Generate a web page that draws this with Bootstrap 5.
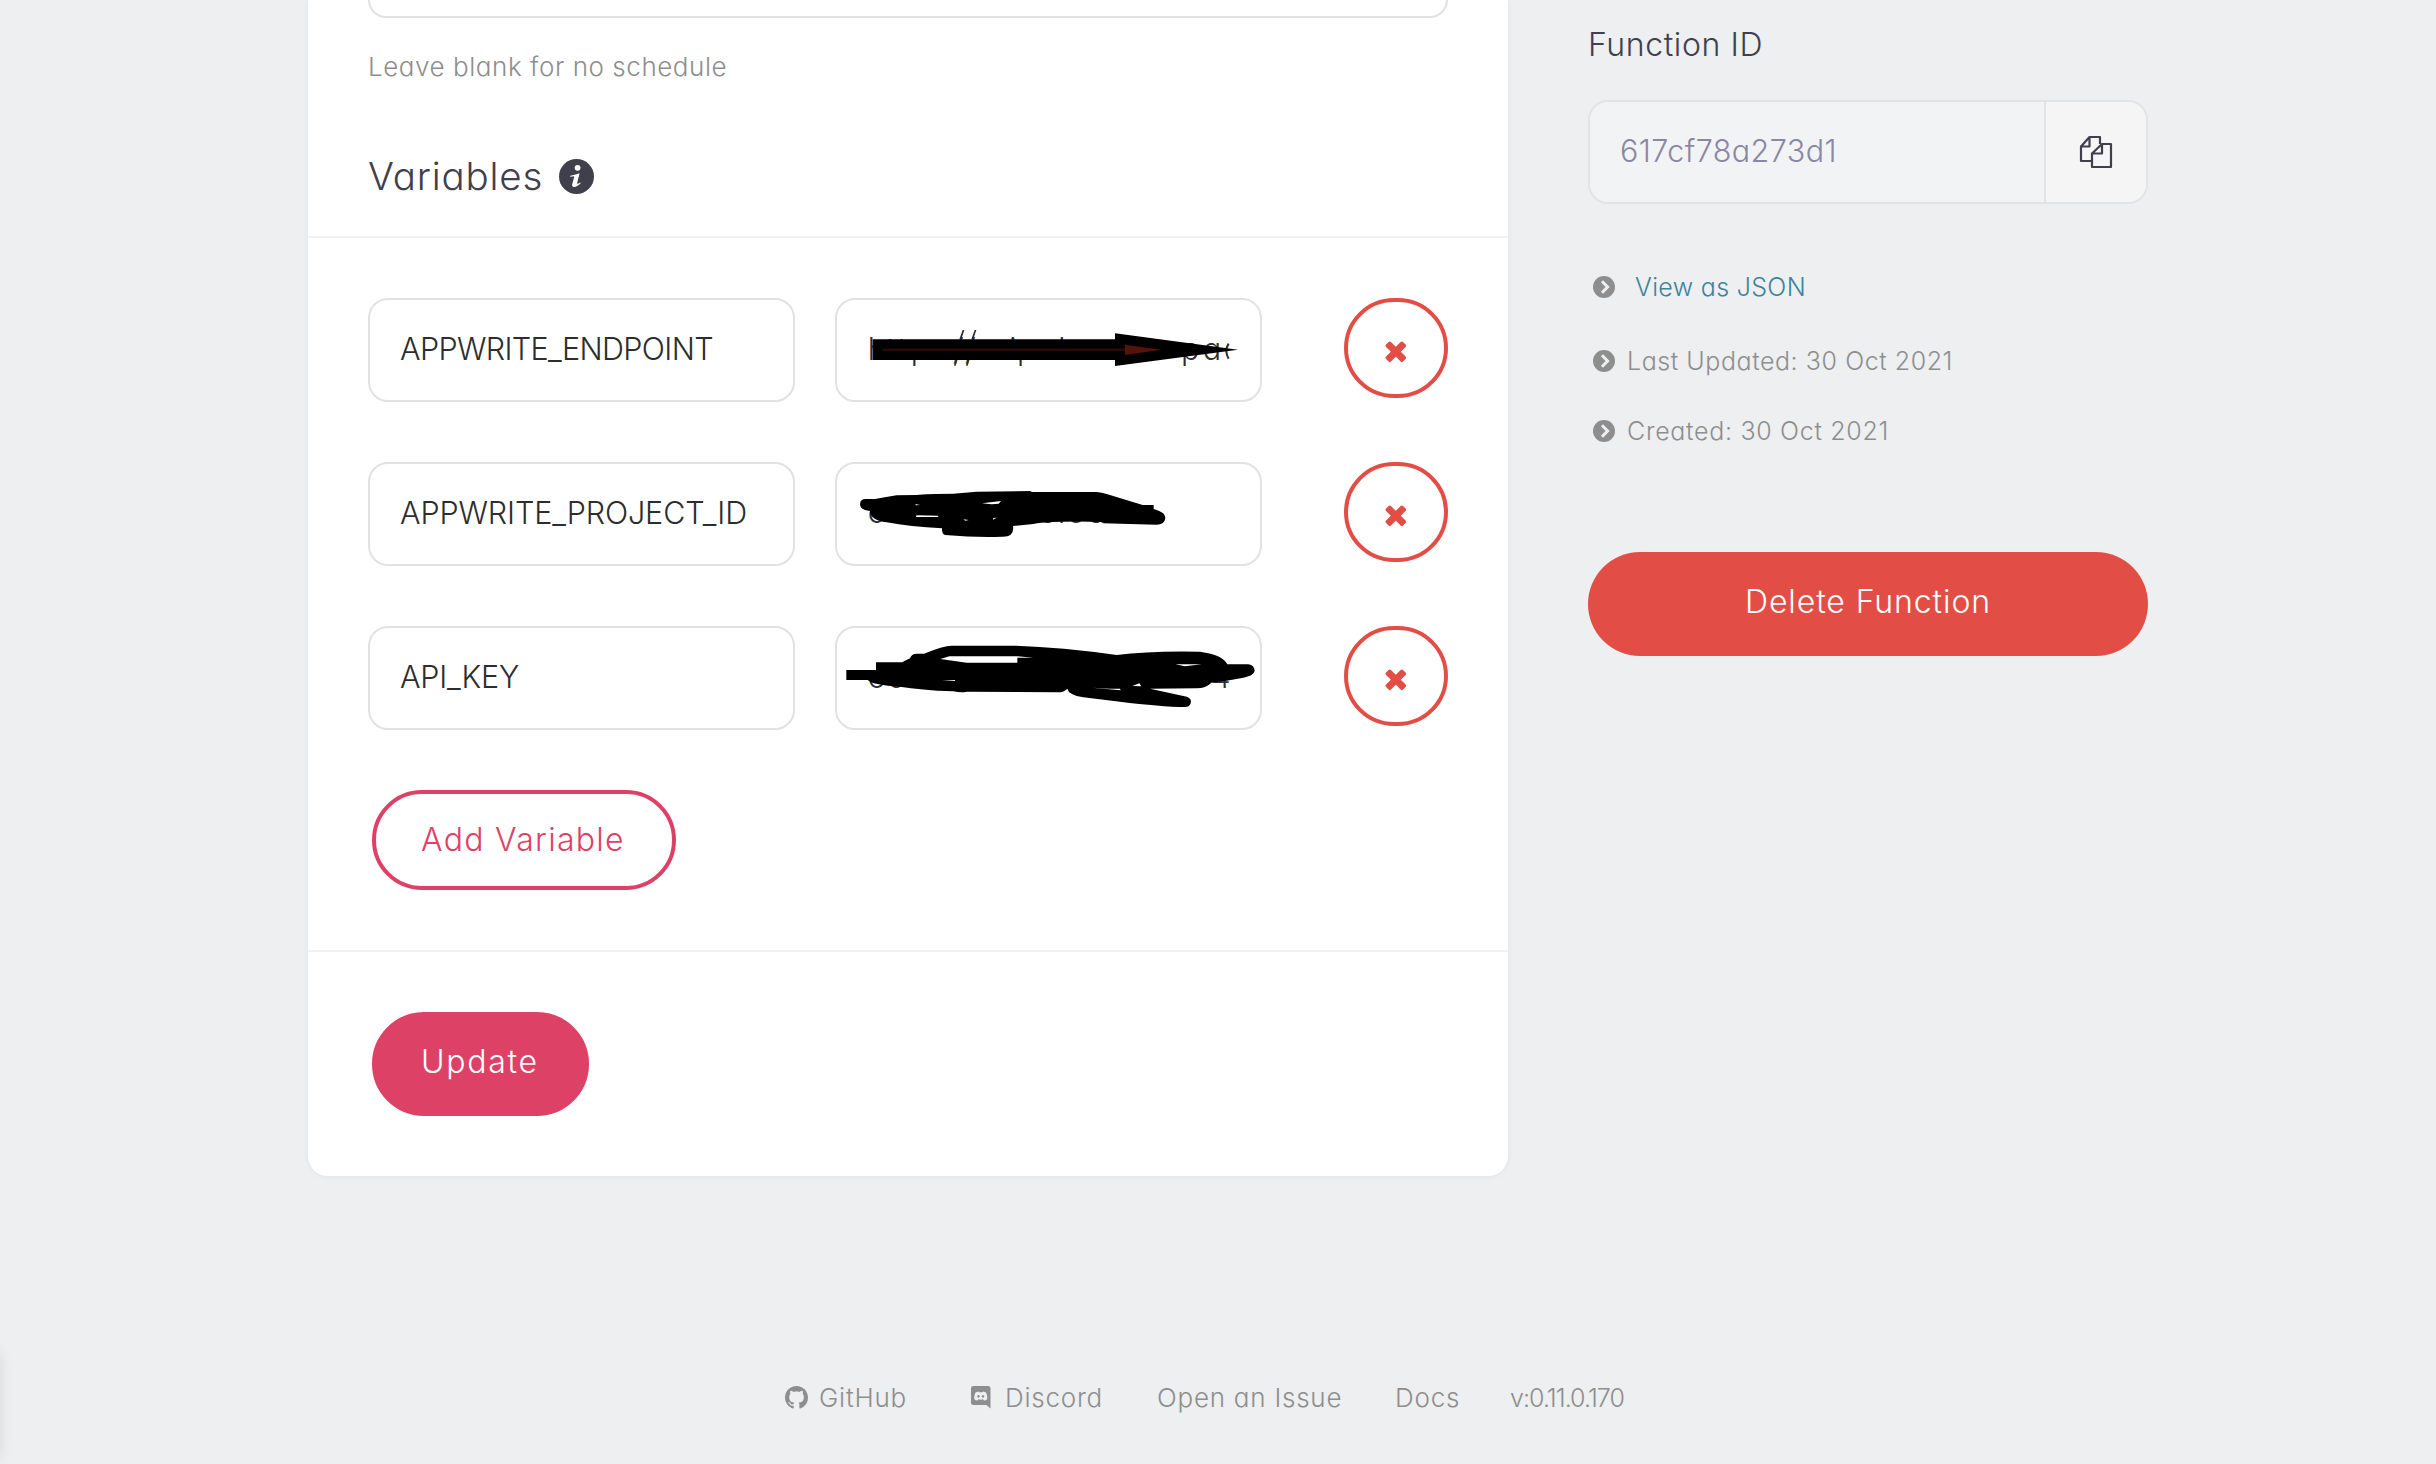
<!DOCTYPE html>
<html lang="en">
<head>
<meta charset="utf-8">
<title>Function settings</title>
<link href="https://cdn.jsdelivr.net/npm/bootstrap@5.3.0/dist/css/bootstrap.min.css" rel="stylesheet">
<style>
html{overflow:hidden}
body{background:#edeff0;font-family:Inter,"Open Sans",sans-serif;font-feature-settings:"cv11","ss03";font-weight:300;color:#2d2d2d;width:2436px;height:1464px;overflow:hidden;position:relative;white-space:nowrap}
.page-body{margin-left:308px;gap:80px}
.panel{width:1200px;height:1176px;background:#fff;border-radius:0 0 20px 20px;box-shadow:0 0 6px rgba(0,0,0,.06)}
.cron-field{height:18px;margin:0 60px;border:2px solid #e2e2e2;border-top:0;border-radius:0 0 20px 20px}
.hint{margin:29px 60px 0;font-size:26px;line-height:40px;letter-spacing:.55px;color:#8e8e8e}
.panel-title{margin:64px 60px 35px;font-size:38.5px;line-height:50px;font-weight:300;letter-spacing:.8px;color:#40404c}
.panel-title svg{margin-left:16px}
.section{border-top:2px solid #f1f2f2;padding:60px}
.rows{gap:60px}
.var-row{gap:40px;height:104px}
.field{width:427px;height:104px;border:2px solid #e2e2e2;border-radius:20px;padding:0 0 3px 30px;font-size:30.5px}
.name-endpoint{letter-spacing:-.65px}
.name-project{letter-spacing:-.13px}
.name-key{letter-spacing:-.23px}
.scribble{position:absolute;left:-17px;width:460px;max-width:none;overflow:visible}
.scribble text{font-size:92px;fill:#2d2d2d}
.remove{width:104px;height:100px;border:4px solid #e24e45;border-radius:52px;background:none;padding:8px 1px 0 0}
.pill{border-radius:52px;font-size:32px;font-weight:300;line-height:40px;border:4px solid #dd4266;margin-left:4px;padding:0 0 0 45px;text-align:left}
.add{width:304px;height:100px;color:#dd4266;background:#fff;margin-top:60px;letter-spacing:1.28px}
.update{width:217px;height:104px;color:#fff;background:#dd4266;padding-bottom:5px;letter-spacing:1.7px}
.side{width:560px;padding-top:20px}
.side-title{font-size:32px;line-height:50px;color:#40404c;margin-bottom:30px;letter-spacing:.6px}
.id-box{height:104px;border:2px solid #e2e3e4;border-radius:20px;overflow:hidden;background:#f2f3f5;font-size:30.5px;color:#8987a2;letter-spacing:.44px}
.id-text{padding:0 0 3px 30px}
.copy{width:102px;background:#f5f5f5;border-left:2px solid #e2e3e4}
.facts{margin:63px 0 101px;font-size:25px;line-height:40px;color:#8e8e8e}
.facts li{height:40px}
.facts svg{margin:0 12px 0 5px}
.json{margin-bottom:34px;letter-spacing:.33px}
.json a{color:#3d839c;text-decoration:none;margin-left:8px}
.updated{margin-bottom:30px;letter-spacing:.56px}
.created{letter-spacing:.69px}
.delete{height:104px;border:0;border-radius:52px;background:#e24e45;color:#fff;font-size:32px;font-weight:300;padding:0 0 4px;letter-spacing:.9px}
.foot{margin:202px 0 0 785px;font-size:26px;line-height:40px;letter-spacing:.76px;color:#8e8e8e}
.foot a{color:inherit;text-decoration:none}
.foot-github{width:186px}
.foot-github svg{margin:0 11px 2px 0}
.foot-discord{width:186px}
.foot-discord svg{margin:0 14px 2px 0}
.foot-issue{width:238px}
.foot-docs{width:115px}
.foot-version{font-size:25px;letter-spacing:-.95px}
.edge{position:absolute;left:-20px;top:1352px;width:20px;height:105px;box-shadow:0 0 14px rgba(0,0,0,.1)}
</style>
<script src="https://cdn.jsdelivr.net/npm/bootstrap@5.3.0/dist/js/bootstrap.bundle.min.js"></script>
</head>
<body>
<svg class="d-none"><defs>
<symbol id="chev" viewBox="0 0 22 22"><circle cx="11" cy="11" r="11" fill="#8e8e8e"/><path d="M9 5.2 14.6 11 9 16.8" fill="none" stroke="#edeff0" stroke-width="3"/></symbol>
<symbol id="cross" viewBox="0 0 22 22"><g transform="translate(10.800 10.800) rotate(45)" fill="#e24e45"><rect x="-12" y="-3.500" width="24" height="7" rx="1.700"/><rect x="-3.500" y="-12" width="7" height="24" rx="1.700"/></g></symbol>
</defs></svg>
<main class="d-flex page-body">
<div class="panel">
  <div class="cron-field"></div>
  <div class="hint">Leave blank for no schedule</div>
  <h2 class="panel-title d-flex align-items-center"><span>Variables</span>
    <svg width="35" height="35" viewBox="0 0 35 35"><circle cx="17.5" cy="17.5" r="17.5" fill="#40404c"/><circle cx="18.6" cy="8.8" r="2.9" fill="#fff"/><path d="M11.300 16.800Q15.500 15.800 20.600 14.200L18.100 24.200Q17.800 25.600 21.300 23.600L21.500 24.600Q17.500 28.400 14.600 28Q12.600 27.600 13.300 24.800L15.200 18Q15.400 16.800 11.500 17.900Z" fill="#fff"/></svg></h2>
  <div class="section d-flex flex-column align-items-start">
    <div class="d-flex flex-column rows w-100">
      <div class="d-flex var-row">
        <div class="field name-endpoint d-flex align-items-center">APPWRITE_ENDPOINT</div>
        <div class="field position-relative">
          <svg class="scribble" style="top:-20px" height="140" viewBox="0 0 1380 420"><text x="143 199 234 272 399 435 568 591 715 1083 1148" y="240">http//iplpa</text><path d="M418 178 428 150H433L424 178ZM454 178 464 150H469L460 178ZM402 257 408 238H413L407 257ZM438 257 444 238H449L443 257Z" fill="#2d2d2d"/><path d="M1226 191Q1212 212 1226 236" fill="none" stroke="#2d2d2d" stroke-width="6"/><path d="M158 178H885V160L1254 209 885 258V240H158Z"/><path d="M188 206.500H915V194L1025 209 915 225V211.500H188Z" fill="#54140c"/><path d="M188 206.500H915V211.500H188Z" fill="#2a0804"/></svg></div>
        <button class="remove ms-auto" aria-label="Remove"><svg class="d-block mx-auto" width="22" height="22"><use href="#cross"/></svg></button>
      </div>
      <div class="d-flex var-row">
        <div class="field name-project d-flex align-items-center">APPWRITE_PROJECT_ID</div>
        <div class="field position-relative">
          <svg class="scribble" style="top:-14px" height="130" viewBox="0 0 1380 390"><text x="143 656 714 740 800 838" y="220">oelecl</text><path d="M137 147H165Q200 141 230 136L290 135Q320 131 400 131L470 125 630 123 636 126H830Q845 127 860 132L968 165H1001V177Q1037 187 1036 204Q1034 224 1010 224L850 220 850 216Q700 212 640 222L579 228Q584 262 545 260Q470 263 375 255Q365 252 366 235Q270 230 200 217Q150 210 150 183Q120 180 120 162Q121 147 137 147Z"/><path d="M290 196 353 197 356 201H288ZM486 160 543 153 536 161 515 163ZM286 162 300 165 288 166ZM430 208 446 210 436 212ZM520 204 530 203 519 209Z" fill="#fff"/></svg></div>
        <button class="remove ms-auto" aria-label="Remove"><svg class="d-block mx-auto" width="22" height="22"><use href="#cross"/></svg></button>
      </div>
      <div class="d-flex var-row">
        <div class="field name-key d-flex align-items-center">API_KEY</div>
        <div class="field position-relative">
          <svg class="scribble" style="top:-18px" height="130" viewBox="0 0 1380 390"><text x="143 202 824 868 1174" y="233">ooen4</text><path fill-rule="evenodd" d="M79 180H168V157H246L270 145Q274 131 290 131H312Q370 107 395 107H580Q720 111 890 135Q990 122 1140 125Q1210 135 1222 163H1285Q1304 166 1304 183Q1300 198 1270 203L1220 212 1174 218Q1158 235 1130 235L990 236 1090 258Q1113 261 1113 275Q1111 291 1095 291Q1020 290 900 275L790 262Q745 254 742 236Q732 247 715 247L440 245Q425 249 400 244Q300 240 240 230Q160 226 143 210H79ZM361 147 388 139H592L640 143H592V158H440ZM816 233 902 241 900 236H868ZM937 228 964 229 958 220ZM1066 163 1145 163 1095 169ZM366 212 406 210 404 213Z"/></svg></div>
        <button class="remove ms-auto" aria-label="Remove"><svg class="d-block mx-auto" width="22" height="22"><use href="#cross"/></svg></button>
      </div>
    </div>
    <button class="pill add">Add Variable</button>
  </div>
  <div class="section"><button class="pill update">Update</button></div>
</div>
<aside class="side">
  <div class="side-title">Function ID</div>
  <div class="id-box d-flex"><div class="id-text flex-grow-1 d-flex align-items-center">617cf78a273d1</div>
    <div class="copy d-flex align-items-center justify-content-center"><svg width="34" height="34" viewBox="0 0 34 34" fill="none" stroke="#40404c" stroke-width="2.2" stroke-linejoin="round"><path d="M13 26H2V11.5L10.500 2H21V9M10.500 2V11.500H2M23 9H32V32H13V18.500L23 9V18.500H13"/></svg></div></div>
  <ul class="facts list-unstyled">
    <li class="json d-flex align-items-center"><svg width="22" height="22"><use href="#chev"/></svg><a href="#">View as JSON</a></li>
    <li class="updated d-flex align-items-center"><svg width="22" height="22"><use href="#chev"/></svg>Last Updated: 30 Oct 2021</li>
    <li class="created d-flex align-items-center"><svg width="22" height="22"><use href="#chev"/></svg>Created: 30 Oct 2021</li>
  </ul>
  <button class="delete w-100">Delete Function</button>
</aside>
</main>
<footer class="foot d-flex">
  <a href="#" class="foot-github d-flex align-items-center"><svg width="23" height="23" viewBox="0 0 16 16" fill="#8e8e8e"><path d="M8 0C3.58 0 0 3.58 0 8c0 3.54 2.29 6.53 5.47 7.59.4.07.55-.17.55-.38 0-.19-.01-.82-.01-1.49-2.01.37-2.53-.49-2.69-.94-.09-.23-.48-.94-.82-1.13-.28-.15-.68-.52-.01-.53.63-.01 1.08.58 1.230.82.72 1.210 1.870.87 2.330.66.07-.52.28-.87.51-1.070-1.780-.2-3.640-.89-3.640-3.950 0-.87.31-1.590.82-2.150-.08-.2-.36-1.020.08-2.120 0 0 .67-.21 2.200.82.64-.18 1.320-.27 2-.27s1.360.09 2 .27c1.530-1.040 2.200-.82 2.200-.82.44 1.100.16 1.920.08 2.120.51.56.82 1.270.82 2.150 0 3.070-1.870 3.750-3.650 3.950.29.25.54.73.54 1.480 0 1.070-.01 1.930-.01 2.200 0 .21.15.46.55.38A8.010 8.010 0 0 0 16 8c0-4.420-3.580-8-8-8"/></svg>GitHub</a>
  <a href="#" class="foot-discord d-flex align-items-center"><svg width="20" height="23" viewBox="0 0 20 23" fill="#8e8e8e"><path fill-rule="evenodd" d="M2.500 0H17Q19.500 0 19.500 2.500V22.500L15.500 19H2.500Q0 19 0 16.500V2.500Q0 0 2.500 0ZM7.500 5.500Q5.500 5.700 4.300 6.700Q3 10 3.200 13Q4.500 14.500 6.500 14.500L7.400 13.300Q9.700 14 12.100 13.300L13 14.500Q15 14.500 16.300 13Q16.500 10 15.200 6.700Q14 5.700 12 5.500L11.500 6.200H8ZM7.500 9A1.300 1.400 0 1 1 7.490 9ZM12 9A1.300 1.400 0 1 1 11.990 9Z"/></svg>Discord</a>
  <a href="#" class="foot-issue">Open an Issue</a><a href="#" class="foot-docs">Docs</a><span class="foot-version">v:0.11.0.170</span>
</footer>
<div class="edge"></div>
</body>
</html>
